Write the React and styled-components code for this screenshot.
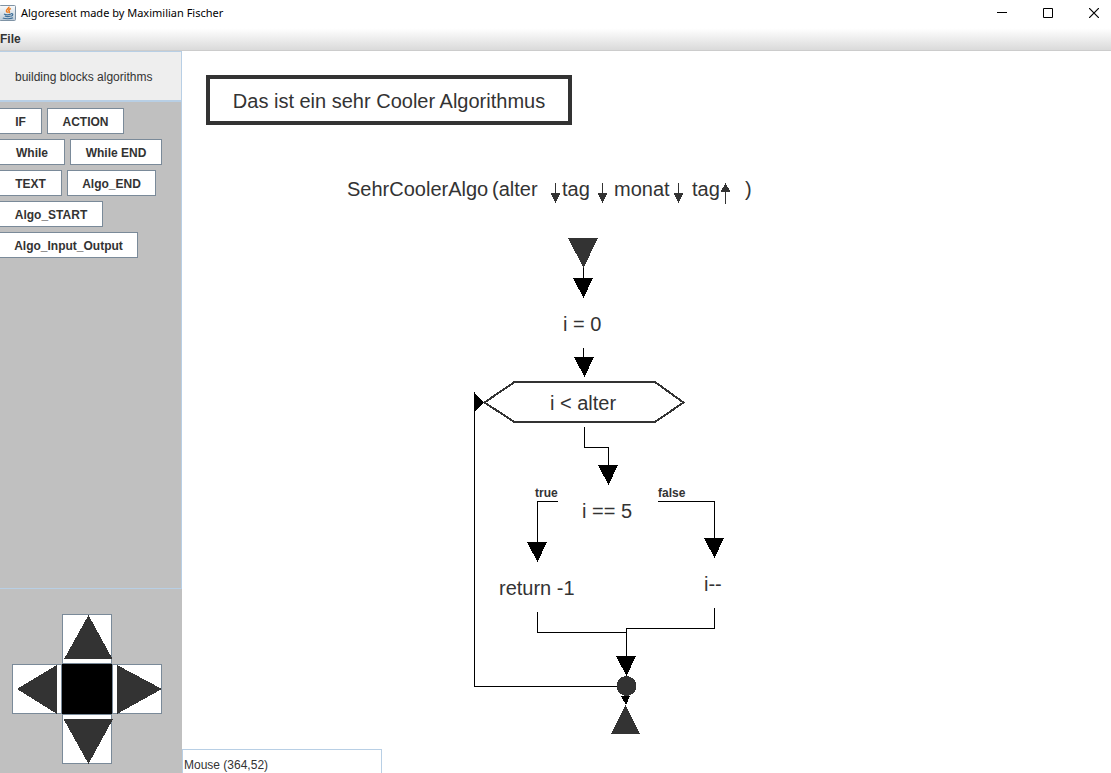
import React from "react";
import styled, { createGlobalStyle } from "styled-components";

const GlobalStyle = createGlobalStyle`
  * { box-sizing: border-box; }
  body {
    margin: 0;
    background: #fff;
    color: #333;
    font-family: "Liberation Sans", Arial, sans-serif;
    font-size: 12px;
    line-height: 16px;
  }
  button { font: inherit; color: inherit; padding: 0; border: 0; background: none; }
`;

const Window = styled.div`
  display: flex;
  flex-direction: column;
  min-height: 100vh;
  overflow: hidden;
`;

const TitleBar = styled.header`
  display: flex;
  align-items: center;
  height: 26px;
  gap: 5px;
  color: #000;
`;

const WindowTitle = styled.h1`
  flex: 1;
  margin: 0;
  font: 400 11px/16px "Noto Sans", sans-serif;
`;

const WindowControls = styled.div`
  display: flex;
  margin-right: -6px;
`;

const ControlButton = styled.button`
  display: grid;
  place-items: center;
  width: 46px;
  height: 26px;
`;

const MenuBar = styled.nav`
  display: flex;
  align-items: center;
  height: 25px;
  padding-top: 2px;
  background: linear-gradient(#fff 10%, #dadada);
  border-bottom: 1px solid #ccc;
`;

const MenuButton = styled.button`
  font-weight: 700;
`;

const Workspace = styled.div`
  display: flex;
  flex: 1;
`;

const Sidebar = styled.aside`
  display: flex;
  flex-direction: column;
  flex: none;
  width: 182px;
  background: #c0c0c0;
`;

const SidebarHeading = styled.h2`
  margin: 0;
  padding: 17px 15px 15px;
  font-size: 12px;
  font-weight: 400;
  white-space: nowrap;
  background: #eee;
  border: 1px solid #b8cfe5;
  border-left: 0;
`;

const BlockList = styled.div`
  display: flex;
  flex: 1;
  flex-direction: column;
  gap: 5px;
  padding: 6px 0;
  border: 1px solid #b8cfe5;
  border-left: 0;
`;

const BlockRow = styled.div`
  display: flex;
  gap: 5px;
  margin-left: -1px;
`;

const BlockButton = styled.button`
  width: ${(p) => p.$width}px;
  height: 26px;
  padding-top: 1px;
  font-weight: 700;
  white-space: nowrap;
  background: #fff;
  border: 1px solid #7a8a99;
`;

const PanPad = styled.div`
  display: grid;
  grid-template: repeat(3, 50px) / repeat(3, 50px);
  grid-template-areas: ". up ." "left center right" ". down .";
  padding: 25px 12px 9px;
`;

const PanButton = styled.button`
  grid-area: ${(p) => p.$area};
  background: ${(p) => (p.$area === "center" ? "#000" : "#fff")};
  border: 1px solid ${(p) => (p.$area === "center" ? "#000" : "#7a8a99")};

  svg {
    display: block;
    margin: -1px;
    overflow: visible;
  }
`;

const Canvas = styled.main`
  position: relative;
  display: flex;
  flex: 1;
  flex-direction: column;
  min-width: 0;
  min-height: 722px;
`;

const Connectors = styled.svg`
  position: absolute;
  inset: 0;
  width: 100%;
  height: 100%;
`;

const Node = styled.div`
  position: absolute;
  left: ${(p) => p.$x}px;
  top: ${(p) => p.$y}px;
  font-size: 20px;
  line-height: 24px;
  white-space: pre;
`;

const TitleNode = styled(Node)`
  width: 366px;
  padding: 10px 0 8px;
  text-align: center;
  border: 4px solid #333;
`;

const BranchLabel = styled(Node)`
  font-size: 12px;
  font-weight: 700;
  line-height: 16px;
`;

const StatusBox = styled.output`
  width: 200px;
  height: 24px;
  margin-top: auto;
  padding: 7px 1px 0;
  background: #fff;
  border: 1px solid #b8cfe5;
  border-bottom: 0;
`;

const blockRows = [
  [{ name: "IF", width: 43 }, { name: "ACTION", width: 77 }],
  [{ name: "While", width: 66 }, { name: "While END", width: 92 }],
  [{ name: "TEXT", width: 63 }, { name: "Algo_END", width: 89 }],
  [{ name: "Algo_START", width: 104 }],
  [{ name: "Algo_Input_Output", width: 139 }],
];

const panButtons = [
  { area: "up", label: "Move up", points: "26.5,1 2,45 50.5,45" },
  { area: "left", label: "Move left", points: "5,25 45,1 45,50" },
  { area: "center", label: "Center" },
  { area: "right", label: "Move right", points: "5,1 5,50 50,25" },
  { area: "down", label: "Move down", points: "1.5,5 51,5 26.5,50" },
];

const nodes = [
  { x: 165, y: 126, text: "SehrCoolerAlgo" },
  { x: 310, y: 126, text: "(alter" },
  { x: 380, y: 126, text: "tag" },
  { x: 432, y: 126, text: "monat" },
  { x: 510, y: 126, text: "tag" },
  { x: 563, y: 126, text: ")" },
  { x: 381, y: 261, text: "i = 0" },
  { x: 368, y: 340, text: "i < alter" },
  { x: 400, y: 448, text: "i == 5" },
  { x: 317, y: 525, text: "return -1" },
  { x: 522, y: 521, text: "i--" },
];

const arrowHeads = [
  [401, 227],
  [402, 306],
  [426, 414],
  [355, 491],
  [532, 487],
  [444, 605],
];

const JavaIcon = () => (
  <svg width="16" height="16" viewBox="0 0 16 16" fill="none" aria-hidden="true">
    <defs>
      <linearGradient id="tile" x2="0" y2="1">
        <stop stopColor="#fbfcfd" />
        <stop offset="1" stopColor="#bccbd8" />
      </linearGradient>
    </defs>
    <rect x="-.5" y=".5" width="16" height="15" rx="1" fill="url(#tile)" stroke="#7f93a5" />
    <path d="M8.8 1.6c.8 1.7-3 2.600-2.300 4.500.3.800 1 1 1.200 1.700M10.800 3.600C8.800 4.500 8.300 5.300 9.200 6.400c.5.600.1 1.200-.4 1.600" stroke="#ee7d22" strokeWidth="1.600" />
    <path d="M4 9c1.500.8 5 .8 7 0M4.800 11c1.500.7 4.200.7 5.800 0M2.800 13c2.400 1 8 1 10.200-.2M11 8.700c2.200-.5 2.600 1.700-.2 2.600" stroke="#3f6f98" strokeWidth="1.200" />
  </svg>
);

export default function App() {
  return (
    <Window>
      <GlobalStyle />
      <TitleBar>
        <JavaIcon />
        <WindowTitle>Algoresent made by Maximilian Fischer</WindowTitle>
        <WindowControls>
          <ControlButton aria-label="Minimize">
            <svg width="10" height="10"><path d="M0 4.5H10" stroke="#000" /></svg>
          </ControlButton>
          <ControlButton aria-label="Maximize">
            <svg width="10" height="10"><path d="M.5.5H9.5V9.5H.5Z" fill="none" stroke="#000" /></svg>
          </ControlButton>
          <ControlButton aria-label="Close">
            <svg width="10" height="10"><path d="M0 0 10 10M10 0 0 10" stroke="#000" strokeWidth="1.2" /></svg>
          </ControlButton>
        </WindowControls>
      </TitleBar>
      <MenuBar>
        <MenuButton>File</MenuButton>
      </MenuBar>
      <Workspace>
        <Sidebar>
          <SidebarHeading>building blocks algorithms</SidebarHeading>
          <BlockList>
            {blockRows.map((row) => (
              <BlockRow key={row[0].name}>
                {row.map(({ name, width }) => (
                  <BlockButton key={name} $width={width}>{name}</BlockButton>
                ))}
              </BlockRow>
            ))}
          </BlockList>
          <PanPad>
            {panButtons.map(({ area, label, points }) => (
              <PanButton key={area} $area={area} aria-label={label}>
                {points && (
                  <svg width="50" height="50" shapeRendering="crispEdges">
                    <polygon points={points} fill="#333" />
                  </svg>
                )}
              </PanButton>
            ))}
          </PanPad>
        </Sidebar>
        <Canvas>
          <Connectors fill="none" shapeRendering="crispEdges" aria-hidden="true">
            <g stroke="#000">
              <path d="M401.5 216V227M401.5 297V306" />
              <path d="M402.5 376V396.5H426.5V414" />
              <path d="M376 450.5H355.5V491M476 450.5H532.5V487" />
              <path d="M355.5 561V581.5H444.5M532.5 557V577.5H444.5V605" />
              <path d="M292.5 341V635.5H435" />
            </g>
            <g fill="#000">
              {arrowHeads.map(([x, y]) => (
                <path key={`${x}-${y}`} d={`M${x - 10} ${y}h20l-9.5 20z`} />
              ))}
              <path d="M292 341 302 351.5 292 361Z" />
              <path d="M439 645H448L444 654Z" />
            </g>
            <path d="M302.5 351.5 332.5 331H473L501.5 351.5 473 371H332.5Z" stroke="#333" strokeWidth="2" />
            <g fill="#333">
              <path d="M386 187H416L401.5 217Z" />
              <circle cx="444.5" cy="635" r="10" />
              <path d="M443.5 654 458 683H429Z" />
              {[373.5, 420.5, 496.5].map((x) => (
                <path key={x} d={`M${x - 0.5} 132h1v10h4.5l-5 10l-5-10h4.5z`} />
              ))}
              <path d="M543.5 132l5 9h-4.5v12h-1v-12h-4.5z" />
            </g>
          </Connectors>
          <TitleNode $x={24} $y={24}>Das ist ein sehr Cooler Algorithmus</TitleNode>
          {nodes.map(({ x, y, text }) => (
            <Node key={`${x}-${y}`} $x={x} $y={y}>{text}</Node>
          ))}
          <BranchLabel $x={353} $y={434}>true</BranchLabel>
          <BranchLabel $x={476} $y={434}>false</BranchLabel>
          <StatusBox>Mouse (364,52)</StatusBox>
        </Canvas>
      </Workspace>
    </Window>
  );
}
